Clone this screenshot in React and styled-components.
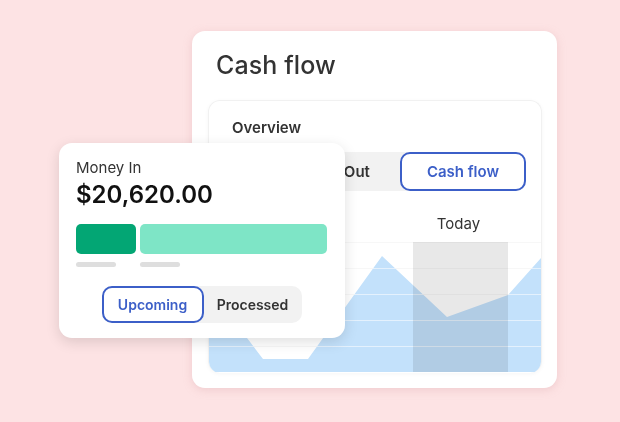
import React from "react";
import styled, { createGlobalStyle } from "styled-components";

const GlobalStyle = createGlobalStyle`
  html, body {
    margin: 0;
    padding: 0;
    background: #fde3e4;
  }
  body {
    font-family: Inter, "Noto Sans", sans-serif;
    color: #333;
  }
`;

const BLUE = "#3c5fc8";

// chart data, in chart coordinates (334 x 130)
const AREA = "0,45 55,117 100,117 174,14 239,75 300,53 334,15 334,130 0,130";
const GRID = [0, 26, 52, 78, 104];

export default function App() {
  return (
    <>
      <GlobalStyle />
      <Stage>
        <MainCard>
          <Title>Cash flow</Title>
          <Panel>
            <PanelLabel>Overview</PanelLabel>
            <TabBar>
              <Tab>Money Out</Tab>
              <Tab active>Cash flow</Tab>
            </TabBar>
            <TodayRow>
              <TodayLabel>Today</TodayLabel>
            </TodayRow>
            <Chart viewBox="0 0 334 130" width="334" height="130">
              {GRID.map((y) => (
                <line key={"g" + y} x1="0" x2="334" y1={y + 0.5} y2={y + 0.5} stroke="#eeeeee" />
              ))}
              <polygon points={AREA} fill="#c3e1fb" />
              {GRID.map((y) => (
                <line key={"w" + y} x1="0" x2="334" y1={y + 0.5} y2={y + 0.5} stroke="#ffffff" strokeOpacity="0.55" />
              ))}
              <rect x="205" y="0" width="95" height="130" fill="#e8e8e8" style={{ mixBlendMode: "multiply" }} />
            </Chart>
          </Panel>
        </MainCard>

        <MoneyCard>
          <Label>Money In</Label>
          <Amount>$20,620.00</Amount>
          <Bars>
            <Bar tone="#03a674" />
            <Bar tone="#7ee5c6" />
            <Legend />
            <Legend />
          </Bars>
          <Toggle>
            <ToggleButton active>Upcoming</ToggleButton>
            <ToggleButton>Processed</ToggleButton>
          </Toggle>
        </MoneyCard>
      </Stage>
    </>
  );
}

// Style
const Stage = styled.div`
  position: relative;
  width: 620px;
  height: 422px;
  padding: 31px 0 0 192px;
  box-sizing: border-box;
  overflow: hidden;
`;

const MainCard = styled.div`
  width: 365px;
  height: 357px;
  box-sizing: border-box;
  background: #fff;
  border-radius: 13px;
  box-shadow: 0 2px 8px rgba(214, 160, 165, 0.35);
  padding: 18px 15px 15px 16px;
  display: flex;
  flex-direction: column;
`;

const Title = styled.h1`
  margin: 0 0 19px 8px;
  font-size: 25px;
  line-height: 32px;
  font-weight: 500;
  color: #333;
  letter-spacing: 0.1px;
`;

const Panel = styled.div`
  width: 334px;
  height: 273px;
  box-sizing: border-box;
  border: 1px solid #f1f1f1;
  border-bottom: none;
  border-radius: 12px;
  overflow: hidden;
  padding-top: 17px;
  display: flex;
  flex-direction: column;
  box-shadow: 0 1px 4px rgba(0, 0, 0, 0.04);
`;

const PanelLabel = styled.div`
  padding: 0 23px;
  font-size: 15px;
  line-height: 20px;
  font-weight: 600;
  color: #333;
`;

const TabBar = styled.div`
  margin: 14px 15px 0 23px;
  height: 39px;
  background: #f2f2f2;
  border-radius: 10px;
  display: flex;
  justify-content: flex-end;
`;

const Tab = styled.div`
  flex: none;
  box-sizing: border-box;
  height: 39px;
  padding: 0 ${(p) => (p.active ? "25px" : "30px")};
  display: flex;
  align-items: center;
  font-size: 15px;
  font-weight: 600;
  color: ${(p) => (p.active ? BLUE : "#333")};
  background: ${(p) => (p.active ? "#fff" : "transparent")};
  border: ${(p) => (p.active ? `2px solid ${BLUE}` : "none")};
  border-radius: 10px;
`;

const TodayRow = styled.div`
  margin-top: 23px;
  height: 20px;
  padding-left: 202px;
`;

const TodayLabel = styled.div`
  width: 95px;
  text-align: center;
  font-size: 15px;
  line-height: 20px;
  color: #333;
`;

const Chart = styled.svg`
  display: block;
  margin-top: 8px;
  margin-left: -1px;
`;

const MoneyCard = styled.div`
  position: absolute;
  left: 59px;
  top: 143px;
  width: 286px;
  height: 195px;
  box-sizing: border-box;
  background: #fff;
  border-radius: 13px;
  box-shadow: 0 4px 14px rgba(0, 0, 0, 0.13);
  padding: 15px 18px 15px 17px;
  display: flex;
  flex-direction: column;
`;

const Label = styled.div`
  font-size: 15px;
  line-height: 20px;
  color: #333;
`;

const Amount = styled.div`
  margin-top: 2px;
  font-size: 24px;
  line-height: 30px;
  font-weight: 600;
  color: #111;
`;

const Bars = styled.div`
  margin-top: 14px;
  display: grid;
  grid-template-columns: 60px 1fr;
  grid-template-rows: 30px 5px;
  column-gap: 4px;
  row-gap: 8px;
`;

const Bar = styled.div`
  background: ${(p) => p.tone};
  border-radius: 5px;
`;

const Legend = styled.div`
  width: 40px;
  background: #dedede;
  border-radius: 3px;
`;

const Toggle = styled.div`
  margin: 19px auto 0;
  width: 200px;
  height: 37px;
  background: #f2f2f2;
  border-radius: 10px;
  display: flex;
`;

const ToggleButton = styled.div`
  flex: ${(p) => (p.active ? "0 0 102px" : "1")};
  box-sizing: border-box;
  display: flex;
  align-items: center;
  justify-content: center;
  font-size: 14px;
  font-weight: 600;
  color: ${(p) => (p.active ? BLUE : "#333")};
  background: ${(p) => (p.active ? "#fff" : "transparent")};
  border: ${(p) => (p.active ? `2px solid ${BLUE}` : "none")};
  border-radius: 10px;
`;
